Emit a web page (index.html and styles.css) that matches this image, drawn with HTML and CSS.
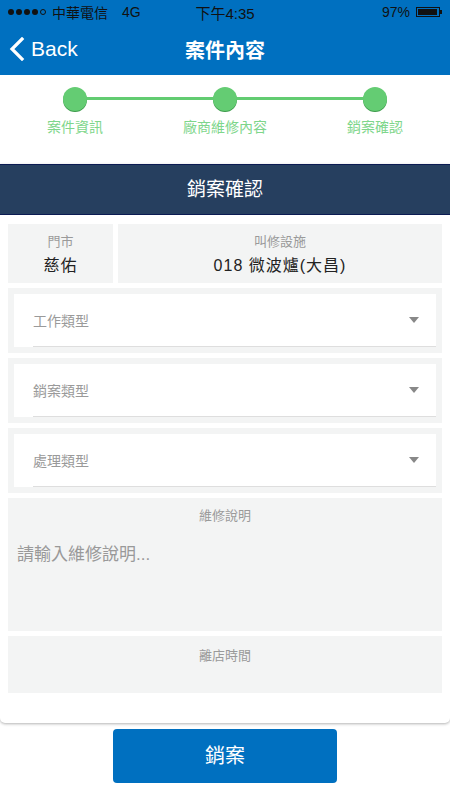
FILE: index.html
```html
<!DOCTYPE html>
<html>
<head>
	<meta charset="UTF-8">
	<title>案件內容</title>
	<link rel="stylesheet" href="styles.css">
</head>
<body>
	<div class="top">
		<div class="status">
			<div class="status_left">
				<span class="dots"><i></i><i></i><i></i><i></i><i class="empty"></i></span>
				<span class="carrier">中華電信</span>
				<span class="net">4G</span>
			</div>
			<div class="status_time">下午4:35</div>
			<div class="status_right">
				<span>97%</span>
				<span class="battery"><b></b></span>
			</div>
		</div>
		<div class="nav">
			<div class="back">
				<svg width="16" height="24" viewBox="0 0 16 24"><path d="M13 2 L3 12 L13 22" fill="none" stroke="#fff" stroke-width="3.2" stroke-linecap="square"/></svg>
				<span>Back</span>
			</div>
			<h1>案件內容</h1>
		</div>
	</div>

	<div class="steps">
		<div class="step"><div class="dot"></div><span>案件資訊</span></div>
		<div class="step"><div class="dot"></div><span>廠商維修內容</span></div>
		<div class="step"><div class="dot"></div><span>銷案確認</span></div>
	</div>

	<div class="card">
		<div class="card_head">銷案確認</div>
		<div class="card_body">
			<div class="info_row">
				<div class="info store">
					<div class="label">門市</div>
					<div class="value">慈佑</div>
				</div>
				<div class="info">
					<div class="label">叫修設施</div>
					<div class="value">018 微波爐(大昌)</div>
				</div>
			</div>
			<div class="select_box">
				<div class="select">
					<div class="field"><span>工作類型</span><i class="arrow"></i></div>
				</div>
			</div>
			<div class="select_box">
				<div class="select">
					<div class="field"><span>銷案類型</span><i class="arrow"></i></div>
				</div>
			</div>
			<div class="select_box">
				<div class="select">
					<div class="field"><span>處理類型</span><i class="arrow"></i></div>
				</div>
			</div>
			<div class="memo">
				<div class="label">維修說明</div>
				<div class="placeholder">請輸入維修說明...</div>
			</div>
			<div class="leave">
				<div class="label">離店時間</div>
			</div>
		</div>
	</div>

	<div class="submit">銷案</div>
</body>
</html>
```

FILE: styles.css
```css
	*{
		margin: 0;
		padding: 0;
		box-sizing: border-box;
		font-family: "Liberation Sans", "Noto Sans CJK TC", sans-serif;
	}
	body{
		background: #fff;
		width: 450px;
	}
	.top{
		background: #0070c0;
		height: 75px;
	}
	.status{
		height: 24px;
		display: flex;
		align-items: center;
		justify-content: space-between;
		padding: 0 8px;
		font-size: 14px;
		color: #111;
	}
	.status_left, .status_right{
		display: flex;
		align-items: center;
		width: 150px;
	}
	.status_right{
		justify-content: flex-end;
		padding-right: 2px;
	}
	.dots{
		display: flex;
		gap: 2px;
		margin-right: 6px;
	}
	.dots i{
		width: 6px;
		height: 6px;
		border-radius: 50%;
		background: #111;
	}
	.dots i.empty{
		background: none;
		border: 1px solid #111;
	}
	.net{
		margin-left: 14px;
	}
	.status_time{
		font-size: 15px;
	}
	.battery{
		width: 24px;
		height: 10px;
		border: 1px solid #111;
		margin-left: 6px;
		padding: 1px;
		position: relative;
	}
	.battery b{
		display: block;
		height: 100%;
		width: 95%;
		background: #111;
	}
	.battery:after{
		content: "";
		position: absolute;
		right: -3px;
		top: 2px;
		width: 2px;
		height: 4px;
		background: #111;
	}
	.nav{
		height: 51px;
		display: flex;
		align-items: center;
		justify-content: center;
		position: relative;
		color: #fff;
	}
	.back{
		position: absolute;
		left: 9px;
		top: 13px;
		display: flex;
		align-items: center;
		gap: 6px;
		font-size: 21px;
	}
	.nav h1{
		font-size: 20px;
		font-weight: bold;
	}
	.steps{
		display: grid;
		grid-template-columns: repeat(3, 1fr);
		padding: 12px 0 27px;
		position: relative;
	}
	.steps:before{
		content: "";
		position: absolute;
		left: 75px;
		right: 75px;
		top: 22px;
		height: 3px;
		background: #62cc71;
	}
	.step{
		display: flex;
		flex-direction: column;
		align-items: center;
		position: relative;
	}
	.dot{
		width: 24px;
		height: 24px;
		border-radius: 50%;
		background: #64cc73;
		box-shadow: 0 1px 0 #3c9a4a;
	}
	.step span{
		margin-top: 6px;
		font-size: 14px;
		line-height: 20px;
		color: #7ed68b;
	}
	.card{
		background: #fff;
		border-radius: 0 0 5px 5px;
		box-shadow: 0 1px 3px rgba(0,0,0,0.3);
	}
	.card_head{
		height: 51px;
		line-height: 49px;
		background: #263f5f;
		border-top: 1px solid #0b1b52;
		border-bottom: 1px solid #0b1b52;
		color: #fff;
		text-align: center;
		font-size: 19px;
	}
	.card_body{
		padding: 9px 8px 30px;
		display: flex;
		flex-direction: column;
		gap: 5px;
	}
	.info_row{
		display: flex;
		gap: 5px;
		height: 59px;
	}
	.info{
		flex: 1;
		background: #f3f4f4;
		text-align: center;
		padding-top: 9px;
	}
	.info.store{
		flex: none;
		width: 105px;
	}
	.label{
		font-size: 13px;
		line-height: 18px;
		color: #9a9a9a;
	}
	.value{
		margin-top: 3px;
		font-size: 16px;
		line-height: 24px;
		letter-spacing: 1px;
		color: #222;
	}
	.select_box{
		background: #f3f4f4;
		padding: 6px;
		height: 65px;
	}
	.select{
		background: #fff;
		height: 53px;
		padding-left: 19px;
	}
	.field{
		height: 53px;
		display: flex;
		align-items: center;
		justify-content: space-between;
		border-bottom: 1px solid #dedede;
		padding-right: 17px;
		font-size: 14px;
		color: #9a9a9a;
	}
	.arrow{
		width: 0;
		height: 0;
		border-left: 5px solid transparent;
		border-right: 5px solid transparent;
		border-top: 6px solid #888;
	}
	.memo{
		background: #f3f4f4;
		height: 133px;
		padding-top: 9px;
		text-align: center;
	}
	.placeholder{
		text-align: left;
		padding-left: 9px;
		margin-top: 18px;
		font-size: 17px;
		line-height: 24px;
		color: #999;
	}
	.leave{
		background: #f3f4f4;
		height: 57px;
		padding-top: 11px;
		text-align: center;
	}
	.submit{
		width: 224px;
		height: 54px;
		margin: 6px auto 0;
		background: #0070c0;
		border-radius: 4px;
		color: #fff;
		font-size: 20px;
		line-height: 54px;
		text-align: center;
	}
```
